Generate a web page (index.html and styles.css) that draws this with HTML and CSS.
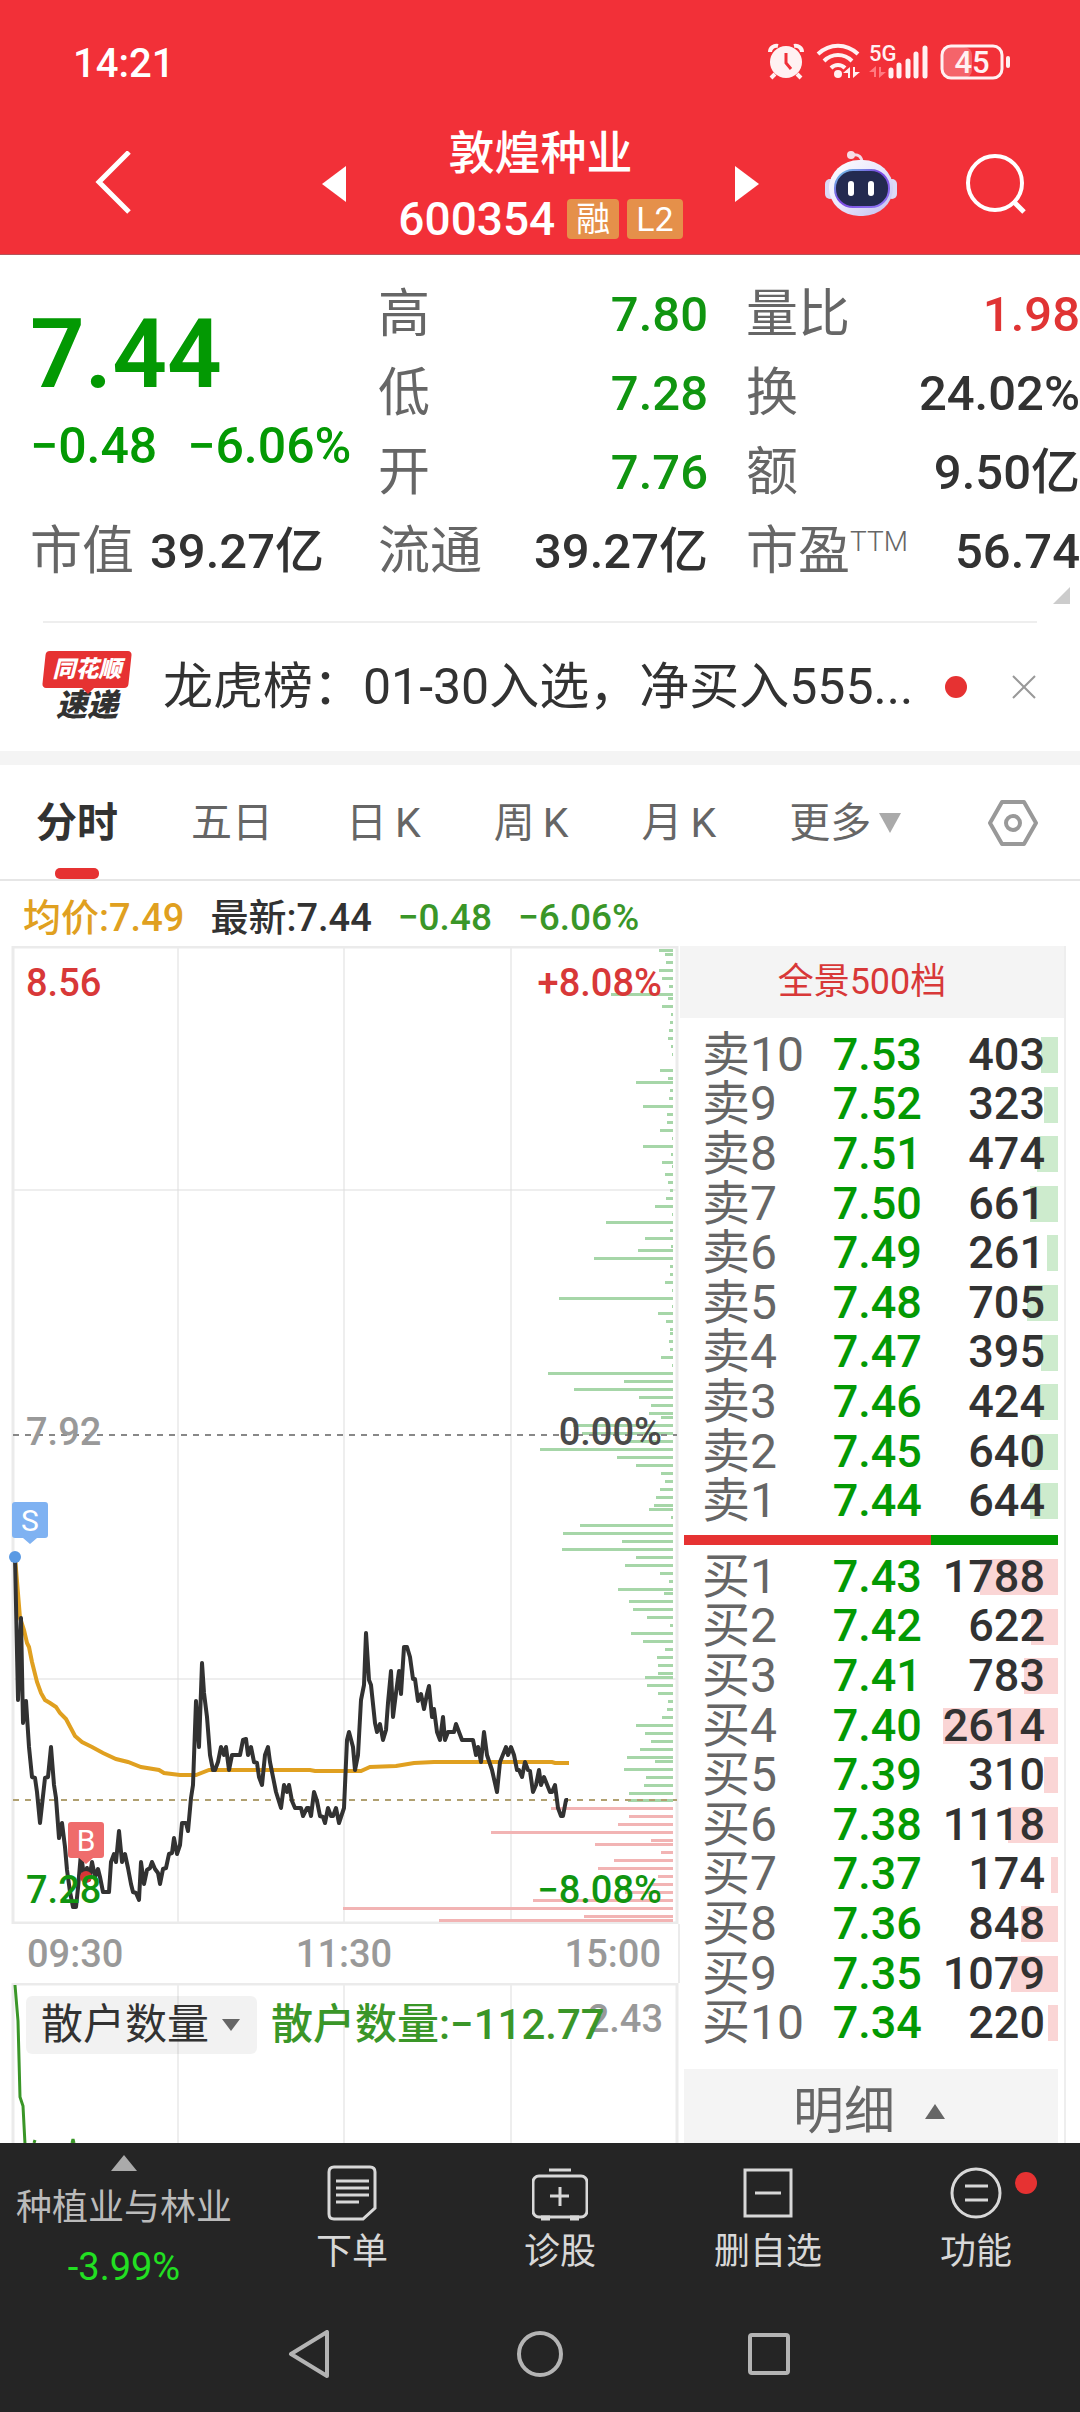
FILE: index.html
```html
<!DOCTYPE html>
<html lang="zh-CN">
<head>
    <meta charset="UTF-8">
    <meta name="viewport" content="width=device-width, initial-scale=1">
    <title>敦煌种业 600354</title>
    <link rel="stylesheet" href="styles.css">
</head>
<body>
<header class="top">
    <div class="status-bar">
        <span class="time">14:21</span>
        <svg class="status-icons" width="246" height="40" viewBox="0 0 246 40" fill="none" stroke="#fff1f2">
            <!-- 闹钟 -->
            <circle cx="18" cy="19" r="16" fill="#fff1f2" stroke="none"/>
            <path d="M2 9c0-4 4-7 8-6M34 9c0-4-4-7-8-6M7 31l-4 4M29 31l4 4" stroke-width="4"/>
            <path d="M18 10v10l5 6" stroke="#f03038" stroke-width="3"/>
            <!-- wifi -->
            <path d="M50 11c12-11 28-11 40 0M56 18c8-8 20-8 28 0M63 25c4-4 10-4 14 0" stroke-width="4"/>
            <circle cx="70" cy="31" r="4" fill="#fff1f2" stroke="none"/>
            <path d="M75 30l7-6v11h-2v-5zM92 29l-7 6v-11h2v5z" fill="#fff1f2" stroke="none"/>
            <!-- 信号 -->
            <text x="101" y="18" class="net">5G</text>
            <path d="M101 29l7-6v11h-2v-5zM118 29l-7 6v-11h2v5z" fill="#ff7a80" stroke="none"/>
            <path d="M123 33v-6M131 33v-11M140 33v-15M148 33v-22M157 33v-28" stroke-width="5" stroke-linecap="round"/>
            <!-- 电量 -->
            <rect x="175" y="4" width="29" height="31" rx="8" fill="#f5646a" stroke="none"/>
            <rect x="174" y="3" width="60" height="32" rx="9" stroke-width="3"/>
            <path d="M240 15v8" stroke-width="4" stroke-linecap="round"/>
            <text x="204" y="30" class="battery">45</text>
        </svg>
    </div>
    <div class="title-bar">
        <button class="icon-btn back" aria-label="返回">
            <svg width="40" height="66" viewBox="0 0 40 66" fill="none" stroke="#fff" stroke-width="5"><path d="M37 1L7 31l30 30"/></svg>
        </button>
        <button class="icon-btn" aria-label="上一只">
            <svg width="24" height="36" viewBox="0 0 24 36" fill="#fff"><path d="M24 0v36L0 18z"/></svg>
        </button>
        <div class="stock">
            <h1>敦煌种业</h1>
            <p><span class="code">600354</span><span class="badge">融</span><span class="badge">L2</span></p>
        </div>
        <button class="icon-btn" aria-label="下一只">
            <svg width="24" height="36" viewBox="0 0 24 36" fill="#fff"><path d="M0 0v36l24-18z"/></svg>
        </button>
        <button class="icon-btn robot" aria-label="智能助手">
            <svg width="72" height="68" viewBox="0 0 72 68">
                <defs>
                    <linearGradient id="head" x1="0" y1="0" x2="1" y2="1"><stop offset="0" stop-color="#fff"/><stop offset=".5" stop-color="#e9e6fb"/><stop offset="1" stop-color="#bfbcee"/></linearGradient>
                    <linearGradient id="rim" x1="0" y1="0" x2="1" y2="1"><stop offset="0" stop-color="#6fd0e8"/><stop offset=".45" stop-color="#7a45e0"/><stop offset="1" stop-color="#8f7bf5"/></linearGradient>
                </defs>
                <path d="M27 5c7-1 10 2 10 8" fill="none" stroke="#f3d9e6" stroke-width="3"/>
                <circle cx="26" cy="5" r="4" fill="#f7dce6"/>
                <rect x="0" y="29" width="10" height="20" rx="5" fill="#dcd9f5"/>
                <rect x="62" y="29" width="10" height="20" rx="5" fill="#dcd9f5"/>
                <rect x="4" y="10" width="64" height="56" rx="30" ry="28" fill="url(#head)"/>
                <rect x="10" y="20" width="54" height="37" rx="18" fill="#232a50" stroke="url(#rim)" stroke-width="2"/>
                <rect x="23" y="31" width="6" height="15" rx="3" fill="#fff"/>
                <rect x="43" y="31" width="6" height="15" rx="3" fill="#fff"/>
            </svg>
        </button>
        <button class="icon-btn search" aria-label="搜索">
            <svg width="62" height="62" viewBox="0 0 62 62" fill="none" stroke="#fff" stroke-width="4"><circle cx="30" cy="30" r="27"/><path d="M48 48l11 11" stroke-width="5"/></svg>
        </button>
    </div>
</header>

<section class="quote">
    <div class="price-box">
        <strong>7.44</strong>
        <p><span>−0.48</span><span>−6.06%</span></p>
    </div>
    <dl class="cell cap"><dt>市值</dt><dd>39.27亿</dd></dl>
    <dl class="cell"><dt>高</dt><dd class="down">7.80</dd></dl>
    <dl class="cell"><dt>低</dt><dd class="down">7.28</dd></dl>
    <dl class="cell"><dt>开</dt><dd class="down">7.76</dd></dl>
    <dl class="cell"><dt>流通</dt><dd>39.27亿</dd></dl>
    <dl class="cell edge"><dt>量比</dt><dd class="up">1.98</dd></dl>
    <dl class="cell edge"><dt>换</dt><dd>24.02%</dd></dl>
    <dl class="cell edge"><dt>额</dt><dd>9.50亿</dd></dl>
    <dl class="cell edge"><dt>市盈<sup>TTM</sup></dt><dd>56.74</dd></dl>
    <i class="corner"></i>
</section>

<section class="notice">
    <div class="logo">
        <span class="logo-top">同花顺</span>
        <span class="logo-bottom">速递</span>
    </div>
    <a href="#">龙虎榜：01-30入选，净买入555...</a>
    <i class="dot"></i>
    <button class="icon-btn" aria-label="关闭">
        <svg width="26" height="26" viewBox="0 0 26 26" stroke="#999" stroke-width="2"><path d="M2 2l22 22M24 2L2 24"/></svg>
    </button>
</section>

<nav class="tabs">
    <button class="active">分时</button>
    <button>五日</button>
    <button>日<span>K</span></button>
    <button>周<span>K</span></button>
    <button>月<span>K</span></button>
    <button>更多<svg width="22" height="20" viewBox="0 0 22 20" fill="#aaa"><path d="M0 0h22L11 20z"/></svg></button>
    <button class="setting" aria-label="设置">
        <svg width="50" height="48" viewBox="0 0 50 48" fill="none" stroke="#999" stroke-width="4" stroke-linejoin="round"><path d="M14 3h22l12 21-12 21H14L2 24z"/><circle cx="25" cy="24" r="7"/></svg>
    </button>
</nav>

<p class="legend">
    <span class="avg">均价:7.49</span>
    <span>最新:7.44</span>
    <span class="chg">−0.48</span>
    <span class="chg">−6.06%</span>
</p>

<main class="main">
    <div class="charts">
        <svg class="chart" viewBox="0 0 680 978">
            <g class="grid">
                <path d="M178 0v977M344 0v977M511 0v977M13 244h664M13 733h664"/>
                <path class="frame" d="M13 1h664v976H13z"/>
            </g>
            <g id="profile"></g>
            <path class="dash" d="M13 489h664"/>
            <path class="dash now" d="M13 854h664"/>
            <polyline class="line-avg" points="15,611 20,672 24,684 27,697 29,701 32,716 34,724 37,736 41,747 45,754 50,757 56,761 60,767 66,773 75,790 82,796 92,801 103,807 116,813 128,816 141,821 159,824 164,827 180,829 196,829 209,824 310,824 315,825 361,825 370,821 396,820 414,817 434,816 552,816 555,817 569,817"/>
            <polyline class="line-price" points="15,611 18,754 21,672 23,777 26,755 29,801 32,831 35,832 37,846 40,877 45,832 48,831 51,801 54,839 56,852 59,892 62,877 65,901 67,924 70,946 73,961 76,961 78,942 81,907 84,931 87,922 89,934 92,916 95,931 98,923 100,931 103,946 109,946 111,916 114,908 116,916 119,885 122,916 125,908 128,922 131,938 133,946 136,947 139,954 141,916 144,938 147,924 150,922 152,916 155,923 158,927 160,938 163,923 166,922 169,908 172,907 174,892 177,908 180,899 182,877 186,877 188,885 191,852 193,839 196,755 199,801 202,717 204,747 207,771 210,809 213,824 215,824 218,816 221,801 224,809 226,801 229,824 232,809 240,809 243,794 246,793 248,809 251,801 254,816 257,817 259,831 262,839 265,809 268,801 270,816 276,846 281,862 284,839 287,846 289,839 292,855 295,862 301,862 303,870 307,862 309,862 311,870 314,846 317,855 320,870 323,871 325,877 328,862 331,870 333,870 336,862 339,877 344,862 347,794 349,786 353,801 355,824 358,809 361,754 364,739 366,687 369,734 371,739 375,777 377,786 380,778 383,794 386,784 388,757 391,725 393,771 396,747 399,725 401,748 404,701 407,701 410,711 413,733 415,733 418,755 421,748 424,763 427,748 429,740 432,771 434,763 437,786 440,794 443,771 445,794 448,786 454,786 456,778 462,794 473,794 476,809 478,801 481,816 484,786 487,809 492,824 497,846 500,816 506,801 508,809 511,801 514,809 517,824 519,824 522,831 525,816 528,824 530,825 533,846 536,839 539,824 541,839 544,831 550,846 552,846 555,839 558,862 561,870 563,870 566,854 568,854"/>
            <g class="mark sell">
                <path d="M15 556h30q3 0 3 3v30q0 3-3 3h-8l-7 6-7-6h-8q-3 0-3-3v-30q0-3 3-3z"/>
                <circle cx="15" cy="611" r="6"/>
                <text x="30" y="585">S</text>
            </g>
            <g class="mark buy">
                <path d="M71 876h30q3 0 3 3v30q0 3-3 3h-8l-7 6-7-6h-8q-3 0-3-3v-30q0-3 3-3z"/>
                <circle cx="86" cy="931" r="6"/>
                <text x="86" y="905">B</text>
            </g>
            <g class="label">
                <text x="26" y="50" class="c-up">8.56</text>
                <text x="662" y="50" class="c-up end">+8.08%</text>
                <text x="26" y="499" class="c-gray">7.92</text>
                <text x="662" y="499" class="c-dark end">0.00%</text>
                <text x="26" y="957" class="c-down">7.28</text>
                <text x="662" y="957" class="c-down end">−8.08%</text>
            </g>
        </svg>
        <div class="axis"><span>09:30</span><span>11:30</span><span>15:00</span></div>
        <div class="sub-chart">
            <svg viewBox="0 0 680 160">
                <path class="grid" d="M178 0v160M344 0v160M511 0v160"/>
                <path class="frame" d="M13 160V1h664v159"/>
                <path class="retail" d="M15 2l3 36 2 76 3 9 2 38M34 160l1-3M72 160l1-4 1 4"/>
            </svg>
            <div class="sub-head">
                <div class="picker">
                    <select aria-label="指标">
                        <option>散户数量</option>
                    </select>
                </div>
                <span class="retail-val">散户数量:−112.77</span>
                <span class="sub-max">2.43</span>
            </div>
        </div>
    </div>

    <aside class="book">
        <button class="depth">全景500档</button>
        <table id="asks"><tbody></tbody></table>
        <div class="ratio"><i style="width:66%"></i></div>
        <table id="bids"><tbody></tbody></table>
        <button class="detail">明细<svg width="20" height="15" viewBox="0 0 20 15" fill="#666"><path d="M10 0l10 15H0z"/></svg></button>
    </aside>
</main>

<footer>
    <nav class="toolbar">
        <a href="#" class="sector">
            <svg width="26" height="16" viewBox="0 0 26 16" fill="#aaa"><path d="M13 0l13 16H0z"/></svg>
            <span>种植业与林业</span>
            <em>-3.99%</em>
        </a>
        <a href="#" class="tool">
            <svg viewBox="0 0 56 56"><path d="M10 2h36q5 0 5 5v36L39 54H10q-5 0-5-5V7q0-5 5-5z"/><path d="M12 16h33M12 23h33M12 30h33M12 37h23"/></svg>
            下单
        </a>
        <a href="#" class="tool">
            <svg viewBox="0 0 56 56"><rect x="1" y="11" width="54" height="41" rx="6"/><path d="M17 5h22M28 22v19M18 31h19"/><path d="M9 53h9M38 53h9" stroke-width="5"/></svg>
            诊股
        </a>
        <a href="#" class="tool">
            <svg viewBox="0 0 56 56"><rect x="5" y="5" width="46" height="46"/><path d="M15 28h26"/></svg>
            删自选
        </a>
        <a href="#" class="tool">
            <svg viewBox="0 0 56 56"><circle cx="28" cy="28" r="24"/><path d="M17 21h23M17 35h23"/></svg>
            功能
            <i class="dot"></i>
        </a>
    </nav>
    <div class="sys-nav">
        <button class="icon-btn" aria-label="系统返回"><svg width="48" height="48" viewBox="0 0 48 48"><path d="M40 2v44L4 24z"/></svg></button>
        <button class="icon-btn" aria-label="主页"><svg width="48" height="48" viewBox="0 0 48 48"><circle cx="24" cy="24" r="21"/></svg></button>
        <button class="icon-btn" aria-label="最近任务"><svg width="48" height="48" viewBox="0 0 48 48"><rect x="5" y="5" width="38" height="38" rx="2"/></svg></button>
    </div>
</footer>
<script src="script.js"></script>
</body>
</html>
```
FILE: styles.css
```css
* {
    box-sizing: border-box;
}
body {
    margin: 0;
    background: #fff;
    color: #323232;
    font: 400 38px/1 Roboto, "Noto Sans CJK SC", sans-serif;
}
h1, p, dl, dd {
    margin: 0;
}
button, select {
    margin: 0;
    padding: 0;
    border: 0;
    background: none;
    color: inherit;
    font: inherit;
}
a {
    color: inherit;
    text-decoration: none;
}
svg {
    display: block;
}
.icon-btn {
    display: flex;
    align-items: center;
    justify-content: center;
}
.up {
    color: #e03434;
}
.down {
    color: #109510;
}

/* 顶部 */
.top {
    height: 255px;
    background: #f23038;
    color: #fff;
    border-bottom: 1px solid #b5545a;
}
.status-bar {
    display: flex;
    justify-content: space-between;
    align-items: center;
    height: 126px;
    padding: 0 66px 0 73px;
}
.time {
    padding-top: 2px;
    font-size: 40px;
    font-weight: 500;
}
.status-icons {
    overflow: visible;
}
.net, .battery {
    fill: #fff1f2;
    stroke: none;
    font-weight: 500;
}
.net {
    font-size: 22px;
}
.battery {
    font-size: 31px;
    text-anchor: middle;
}
.title-bar {
    display: grid;
    grid-template-columns: 230px 24px 1fr 24px 66px 72px 68px 62px;
    align-items: center;
    height: 112px;
    padding: 0 53px 0 92px;
}
.back {
    justify-self: start;
}
.robot {
    grid-column: 6;
}
.search {
    grid-column: 8;
}
.stock {
    padding-top: 4px;
    text-align: center;
}
.stock h1 {
    margin-bottom: 20px;
    font-size: 46px;
    font-weight: 500;
}
.stock p {
    display: flex;
    justify-content: center;
    align-items: center;
    gap: 8px;
}
.code {
    margin-right: 4px;
    font-size: 46px;
    font-weight: 500;
}
.badge {
    padding: 0 9px;
    border-radius: 4px;
    background: #e5904a;
    font-size: 34px;
    line-height: 40px;
}

/* 报价 */
.quote {
    position: relative;
    display: grid;
    grid-template-columns: 348fr 368fr 334fr;
    grid-template-rows: repeat(4, 79px);
    grid-auto-flow: column;
    height: 366px;
    padding: 20px 0 0 30px;
}
.price-box {
    grid-row: span 3;
    padding-top: 24px;
    color: #039903;
}
.price-box strong {
    display: block;
    font-size: 96px;
    font-weight: 600;
    line-height: 110px;
}
.price-box p {
    display: flex;
    gap: 30px;
    margin-top: 12px;
    font-size: 50px;
    font-weight: 500;
    white-space: nowrap;
}
.cell {
    display: flex;
    justify-content: space-between;
    align-items: center;
    padding-right: 38px;
    font-size: 49px;
    white-space: nowrap;
}
.cell dt {
    color: #666;
    font-size: 52px;
}
.cell dd {
    font-weight: 500;
}
.cell.cap {
    justify-content: flex-start;
    gap: 16px;
}
.cell.edge {
    padding-right: 0;
}
.cell sup {
    font-size: 28px;
    font-weight: 300;
    line-height: 1;
}
.corner {
    position: absolute;
    right: 10px;
    bottom: 17px;
    border-top: 17px solid transparent;
    border-right: 17px solid #ccc;
}

/* 公告 */
.notice {
    display: flex;
    align-items: center;
    height: 130px;
    margin: 0 43px;
    border-top: 2px solid #eee;
}
.logo {
    display: flex;
    flex-direction: column;
    align-items: center;
    width: 88px;
    margin-right: 32px;
    font-style: italic;
    font-weight: 900;
}
.logo-top {
    position: relative;
    z-index: 0;
    width: 86px;
    color: #fff;
    font-size: 23px;
    line-height: 37px;
    text-align: center;
}
.logo-top:before {
    content: "";
    position: absolute;
    top: 0;
    right: 0;
    bottom: 0;
    left: 0;
    z-index: -1;
    border-radius: 4px;
    background: #e63232;
    transform: skewX(-6deg);
}
.logo-top:after {
    content: "";
    position: absolute;
    top: 100%;
    left: 38px;
    border: 6px solid transparent;
    border-top-color: #e63232;
    border-bottom: 0;
}
.logo-bottom {
    font-size: 31px;
    line-height: 36px;
}
.notice a {
    flex: 1;
    font-size: 50px;
    white-space: nowrap;
}
.dot {
    width: 22px;
    height: 22px;
    border-radius: 50%;
    background: #e63232;
}
.notice .icon-btn {
    margin-left: 44px;
}

/* 周期切换 */
.tabs {
    display: flex;
    gap: 73px;
    align-items: center;
    height: 130px;
    padding: 0 42px 0 36px;
    border-top: 14px solid #f4f4f4;
    border-bottom: 2px solid #e6e6e6;
    color: #666;
    font-size: 41px;
}
.tabs button {
    position: relative;
    display: flex;
    align-items: center;
    gap: 8px;
    height: 114px;
    padding-top: 2px;
}
.tabs .setting {
    margin-left: auto;
}
.tabs .active {
    color: #323232;
    font-weight: 700;
}
.tabs .active:after {
    content: "";
    position: absolute;
    left: 50%;
    bottom: 0;
    width: 44px;
    height: 11px;
    margin-left: -22px;
    border-radius: 5px;
    background: #e63232;
}
.legend {
    display: flex;
    align-items: center;
    gap: 26px;
    height: 65px;
    padding: 8px 23px 0;
    font-weight: 500;
}
.avg {
    color: #e0a020;
}
.chg {
    color: #3a9628;
    font-size: 37px;
}

/* 走势图 */
.main {
    display: grid;
    grid-template-columns: 680fr 400fr;
    overflow: hidden;
}
.charts {
    min-width: 0;
}
.chart {
    width: 100%;
    height: auto;
}
.chart path, .chart polyline, .sub-chart path {
    fill: none;
}
.grid {
    stroke: #ddd;
    stroke-width: 1;
}
.frame {
    stroke: #ebebeb;
    stroke-width: 3;
}
.chart .dash {
    stroke: #888;
    stroke-width: 2;
    stroke-dasharray: 6 6;
}
.chart .now {
    stroke: #b0a070;
}
.line-avg {
    stroke: #e0a020;
    stroke-width: 4;
}
.line-price {
    stroke: #323232;
    stroke-width: 4;
    stroke-linejoin: round;
}
.ask {
    fill: #a6d6a8;
}
.bid {
    fill: #f2b4b4;
}
.mark text {
    fill: #fff;
    font-size: 30px;
    text-anchor: middle;
}
.chart .sell path {
    fill: #7fb2f2;
}
.sell circle {
    fill: #5a9ae4;
}
.chart .buy path {
    fill: #ef6c6c;
}
.buy circle {
    fill: #d93636;
}
.label {
    font-size: 38px;
    font-weight: 500;
}
.end {
    text-anchor: end;
}
.c-up {
    fill: #d83838;
}
.c-down {
    fill: #109510;
}
.c-gray {
    fill: #999;
}
.c-dark {
    fill: #4a4a4a;
}
.axis {
    display: flex;
    justify-content: space-between;
    height: 59px;
    padding: 0 17px 0 27px;
    border-right: 2px solid #ebebeb;
    color: #999;
    font-weight: 500;
    line-height: 61px;
}
.sub-chart {
    position: relative;
    height: 160px;
}
.sub-chart > svg {
    position: absolute;
    top: 0;
    left: 0;
    width: 100%;
}
.sub-chart .retail {
    stroke: #3a9628;
    stroke-width: 3;
}
.sub-head {
    position: relative;
    display: flex;
    align-items: center;
    gap: 14px;
    padding: 13px 0 0 26px;
    font-size: 42px;
}
.picker {
    position: relative;
    border-radius: 6px;
    background: rgba(0, 0, 0, .05);
}
.picker:after {
    content: "";
    position: absolute;
    top: 23px;
    right: 17px;
    border: 9px solid transparent;
    border-top: 12px solid #666;
    border-bottom: 0;
    pointer-events: none;
}
.picker select {
    width: 231px;
    height: 58px;
    padding-left: 15px;
    appearance: none;
    line-height: 58px;
}
.retail-val {
    color: #3a9628;
    font-weight: 500;
    white-space: nowrap;
}
.sub-max {
    position: absolute;
    top: 17px;
    right: 17px;
    z-index: -1;
    color: #999;
    font-size: 38px;
    font-weight: 500;
}

/* 盘口 */
.book {
    display: flex;
    flex-direction: column;
    margin-right: 14px;
    border-right: 2px solid #eee;
}
.depth {
    height: 72px;
    margin-bottom: 12px;
    padding-right: 20px;
    background: #f4f4f4;
    color: #d83838;
    font-size: 36px;
}
.book table {
    width: 100%;
    height: 496px;
    border-collapse: collapse;
    table-layout: fixed;
    font-size: 45px;
    font-weight: 500;
}
.book th, .book td {
    position: relative;
    padding: 0;
    text-align: right;
    line-height: 40px;
    white-space: nowrap;
}
.book th {
    width: 34%;
    padding-left: 22px;
    color: #666;
    font-size: 48px;
    font-weight: 400;
    text-align: left;
}
.book td:nth-child(2) {
    width: 29%;
    color: #039903;
}
.book td:last-child {
    padding-right: 19px;
}
.book td i {
    position: absolute;
    right: 6px;
    top: 7px;
    height: 36px;
    background: #cdebcd;
}
#bids td i {
    background: #fad5d5;
}
.book td b {
    position: relative;
    font-weight: 500;
}
.ratio {
    height: 10px;
    margin: 9px 6px 7px 4px;
    background: #039903;
}
.ratio i {
    display: block;
    height: 10px;
    background: #e63232;
}
.detail {
    display: flex;
    align-items: center;
    justify-content: center;
    gap: 30px;
    height: 74px;
    margin: 21px 6px 0 4px;
    padding: 10px 4px 0 0;
    background: #f4f4f4;
    color: #666;
    font-size: 51px;
}

/* 底部 */
footer {
    position: relative;
    background: #252525;
    color: #d8d8d8;
    font-size: 36px;
}
.toolbar {
    display: grid;
    grid-template-columns: 248fr 208fr 208fr 208fr 208fr;
    height: 155px;
    padding-top: 12px;
}
.sector, .tool {
    position: relative;
    display: flex;
    flex-direction: column;
    align-items: center;
    white-space: nowrap;
}
.sector {
    gap: 19px;
    color: #bbb;
}
.sector em {
    margin-top: 3px;
    color: #22e022;
    font-size: 38px;
    font-style: normal;
}
.tool {
    gap: 13px;
    padding-top: 10px;
}
.tool svg {
    width: 56px;
    height: 56px;
    fill: none;
    stroke: #d8d8d8;
    stroke-width: 3;
}
.tool .dot {
    position: absolute;
    top: 17px;
    right: 43px;
}
.sys-nav {
    display: flex;
    justify-content: center;
    gap: 181px;
    height: 114px;
    padding-bottom: 2px;
}
.sys-nav svg {
    fill: none;
    stroke: #b4b4b4;
    stroke-width: 4;
    stroke-linejoin: round;
}
```
FILE: script.js
```javascript
// 筹码分布：[y, 长度]
var asks = [[4,14],[8,8],[16,7],[24,14],[32,11],[40,4],[48,62],[52,5],[60,11],[68,2],[76,3],[84,4],[92,5],[100,2],[108,1],
    [124,13],[132,5],[136,37],[144,3],[152,4],[160,30],[168,6],[176,6],[184,13],[192,1],[200,30],[208,2],[216,11],[220,1],
    [228,8],[236,5],[244,3],[252,7],[260,18],[268,1],[276,67],[284,3],[292,28],[300,2],[304,35],[312,79],[320,3],[328,3],
    [336,8],[344,1],[352,114],[360,1],[367,15],[375,7],[383,3],[387,3],[395,4],[403,3],[411,12],[419,1],[427,125],[435,49],
    [443,99],[451,34],[459,22],[467,24],[471,12],[479,100],[487,91],[495,48],[503,133],[511,56],[519,37],[527,12],[535,8],
    [543,13],[551,17],[559,19],[563,24],[571,2],[579,93],[587,110],[595,51],[603,111],[611,37],[619,48],[627,13],[635,4],
    [643,55],[647,9],[655,44],[663,40],[671,26],[679,3],[687,42],[695,30],[703,8],[711,16],[719,15],[727,15],[731,28],
    [739,26],[747,15],[755,5],[763,6],[771,11],[779,37],[787,28],[795,22],[803,33],[811,46],[815,18],[823,49],[831,27],
    [839,29],[847,44],[854,45]];
var bids = [[862,122],[870,44],[878,55],[886,182],[894,22],[898,78],[906,12],[914,59],[922,75],[930,15],[938,21],[946,48],
    [954,140],[962,330],[970,89],[974,234]];

function drawProfile(data, cls) {
    var g = document.getElementById('profile');
    data.forEach(function (d) {
        var rect = document.createElementNS('http://www.w3.org/2000/svg', 'rect');
        rect.setAttribute('class', cls);
        rect.setAttribute('x', 673 - d[1]);
        rect.setAttribute('y', d[0] - 1);
        rect.setAttribute('width', d[1]);
        rect.setAttribute('height', 3);
        g.appendChild(rect);
    });
}

// 盘口：[档位, 价格, 手数]
var sell = [['卖10','7.53',403],['卖9','7.52',323],['卖8','7.51',474],['卖7','7.50',661],['卖6','7.49',261],
    ['卖5','7.48',705],['卖4','7.47',395],['卖3','7.46',424],['卖2','7.45',640],['卖1','7.44',644]];
var buy = [['买1','7.43',1788],['买2','7.42',622],['买3','7.41',783],['买4','7.40',2614],['买5','7.39',310],
    ['买6','7.38',1118],['买7','7.37',174],['买8','7.36',848],['买9','7.35',1079],['买10','7.34',220]];
var max = 2614;

function fillBook(id, rows) {
    document.querySelector('#' + id + ' tbody').innerHTML = rows.map(function (r) {
        return '<tr><th scope="row">' + r[0] + '</th><td>' + r[1] + '</td>' +
            '<td><i style="width:' + Math.round(r[2] / max * 81) + '%"></i><b>' + r[2] + '</b></td></tr>';
    }).join('');
}

drawProfile(asks, 'ask');
drawProfile(bids, 'bid');
fillBook('asks', sell);
fillBook('bids', buy);
```
